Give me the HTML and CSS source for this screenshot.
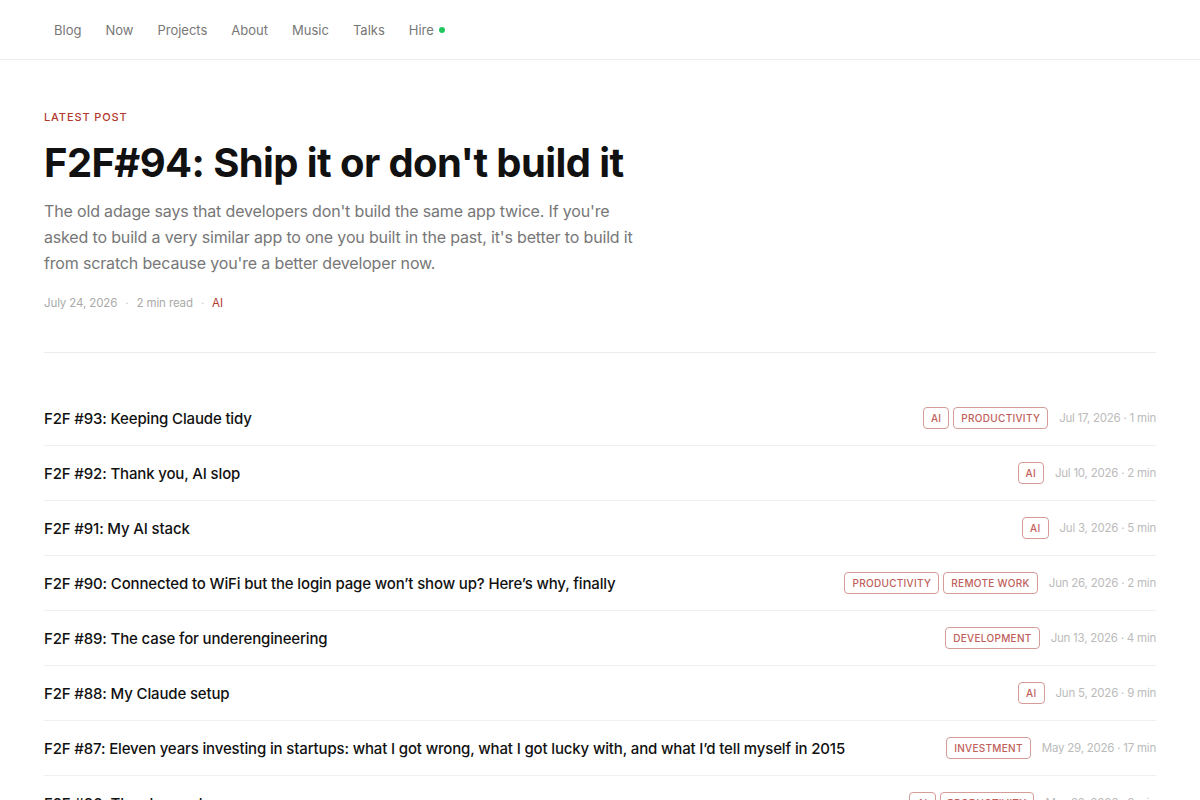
FILE: index.html
```html
<html>
<head>
  <title>Blog</title>
  <link rel="stylesheet" href="styles.css">
</head>
<body>
  <header class="topbar">
    <nav class="nav">
      <a href="#">Blog</a>
      <a href="#">Now</a>
      <a href="#">Projects</a>
      <a href="#">About</a>
      <a href="#">Music</a>
      <a href="#">Talks</a>
      <a href="#" class="hire">Hire <span class="dot"></span></a>
    </nav>
  </header>

  <main class="page">
    <section class="latest">
      <div class="eyebrow">LATEST POST</div>
      <h1>F2F#94: Ship it or don't build it</h1>
      <p class="lede">The old adage says that developers don't build the same app twice. If you're asked to build a very similar app to one you built in the past, it's better to build it from scratch because you're a better developer now.</p>
      <div class="meta">
        <span>July 24, 2026</span>
        <span class="sep">&middot;</span>
        <span>2 min read</span>
        <span class="sep">&middot;</span>
        <span class="cat">AI</span>
      </div>
    </section>

    <ul class="posts">
      <li class="post">
        <a href="#" class="post-title">F2F #93: Keeping Claude tidy</a>
        <div class="post-side">
          <span class="tag">AI</span><span class="tag">PRODUCTIVITY</span>
          <span class="date">Jul 17, 2026 · 1 min</span>
        </div>
      </li>
      <li class="post">
        <a href="#" class="post-title">F2F #92: Thank you, AI slop</a>
        <div class="post-side">
          <span class="tag">AI</span>
          <span class="date">Jul 10, 2026 · 2 min</span>
        </div>
      </li>
      <li class="post">
        <a href="#" class="post-title">F2F #91: My AI stack</a>
        <div class="post-side">
          <span class="tag">AI</span>
          <span class="date">Jul 3, 2026 · 5 min</span>
        </div>
      </li>
      <li class="post">
        <a href="#" class="post-title">F2F #90: Connected to WiFi but the login page won’t show up? Here’s why, finally</a>
        <div class="post-side">
          <span class="tag">PRODUCTIVITY</span><span class="tag">REMOTE WORK</span>
          <span class="date">Jun 26, 2026 · 2 min</span>
        </div>
      </li>
      <li class="post">
        <a href="#" class="post-title">F2F #89: The case for underengineering</a>
        <div class="post-side">
          <span class="tag">DEVELOPMENT</span>
          <span class="date">Jun 13, 2026 · 4 min</span>
        </div>
      </li>
      <li class="post">
        <a href="#" class="post-title">F2F #88: My Claude setup</a>
        <div class="post-side">
          <span class="tag">AI</span>
          <span class="date">Jun 5, 2026 · 9 min</span>
        </div>
      </li>
      <li class="post">
        <a href="#" class="post-title">F2F #87: Eleven years investing in startups: what I got wrong, what I got lucky with, and what I’d tell myself in 2015</a>
        <div class="post-side">
          <span class="tag">INVESTMENT</span>
          <span class="date">May 29, 2026 · 17 min</span>
        </div>
      </li>
      <li class="post">
        <a href="#" class="post-title">F2F #86: The slow web</a>
        <div class="post-side">
          <span class="tag">AI</span><span class="tag">PRODUCTIVITY</span>
          <span class="date">May 22, 2026 · 3 min</span>
        </div>
      </li>
    </ul>
  </main>
</body>
</html>
```

FILE: styles.css
```css
body {
  margin: 0;
  background: #fff;
  color: #111;
  font-family: Inter, "Noto Sans", sans-serif;
}

a {
  color: inherit;
  text-decoration: none;
}

.topbar {
  height: 59px;
  border-bottom: 1px solid #ececec;
  display: flex;
  align-items: center;
  padding: 0 44px;
}

.nav {
  display: flex;
}

.nav a {
  font-size: 13px;
  color: #777;
  padding: 0 10px;
  margin-right: 4px;
  display: flex;
  align-items: center;
  gap: 5px;
}

.dot {
  width: 6px;
  height: 6px;
  border-radius: 50%;
  background: #22c55e;
  display: inline-block;
}

.page {
  padding: 0 44px;
}

.latest {
  padding-top: 50px;
  padding-bottom: 42px;
  border-bottom: 1px solid #ececec;
}

.eyebrow {
  font-size: 11px;
  letter-spacing: 0.08em;
  color: #b2392e;
  font-weight: 500;
}

.latest h1 {
  font-size: 40px;
  font-weight: 700;
  letter-spacing: -0.015em;
  margin: 15px 0 11px;
  line-height: 48px;
  color: #111;
}

.lede {
  font-size: 16px;
  line-height: 26px;
  color: #777;
  margin: 0;
  max-width: 600px;
  letter-spacing: -0.01em;
}

.meta {
  margin-top: 20px;
  font-size: 11.5px;
  color: #aaa;
  display: flex;
  gap: 8px;
  letter-spacing: -0.01em;
}

.meta .sep {
  color: #ccc;
}

.meta .cat {
  color: #b2392e;
}

.posts {
  list-style: none;
  margin: 0;
  padding: 38px 0 0;
}

.post {
  height: 54px;
  border-bottom: 1px solid #efefef;
  display: flex;
  align-items: center;
  justify-content: space-between;
}

.post-title {
  font-size: 15px;
  font-weight: 500;
  letter-spacing: -0.01em;
  color: #111;
}

.post-side {
  display: flex;
  align-items: center;
  gap: 4px;
}

.tag {
  font-size: 10px;
  font-weight: 500;
  letter-spacing: 0.03em;
  color: #c0605a;
  border: 1px solid #d69c98;
  border-radius: 4px;
  padding: 0 7px;
  height: 20px;
  line-height: 20px;
}

.date {
  font-size: 11.5px;
  color: #bbb;
  margin-left: 7px;
  letter-spacing: -0.02em;
}
```
